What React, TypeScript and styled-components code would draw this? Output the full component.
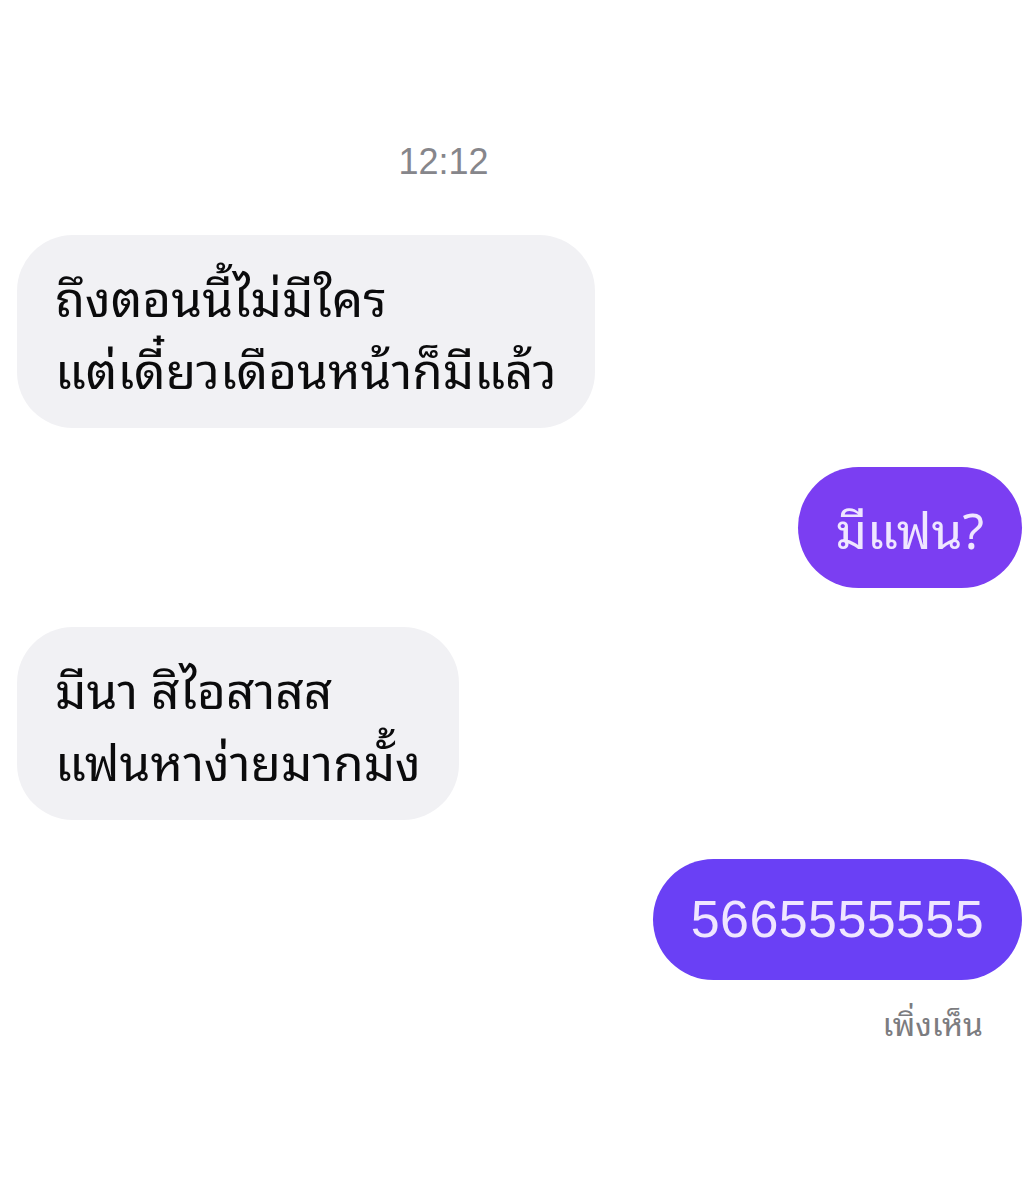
import React from "react";
import styled, { createGlobalStyle } from "styled-components";

const THAI = `"Noto Sans Thai Looped", "Noto Sans Thai", "Noto Sans", "DejaVu Sans", sans-serif`;

const GlobalStyle = createGlobalStyle`
  html, body {
    margin: 0;
    padding: 0;
    background: #ffffff;
  }
  body {
    font-family: ${THAI};
  }
`;

const Thread = styled.div`
  width: 1035px;
  min-height: 1192px;
  box-sizing: border-box;
  padding: 138px 13px 0 17px;
  display: flex;
  flex-direction: column;
  gap: 39px;
`;

const Stamp = styled.div`
  align-self: center;
  margin-right: 152px;
  margin-bottom: 10px;
  font-family: "Liberation Sans", Arial, sans-serif;
  font-size: 36px;
  line-height: 48px;
  color: #86868b;
`;

const Row = styled.div<{ $mine?: boolean }>`
  display: flex;
  flex-direction: column;
  align-items: ${(p) => (p.$mine ? "flex-end" : "flex-start")};
`;

const Bubble = styled.div<{ $mine?: boolean; $tone?: string }>`
  box-sizing: border-box;
  padding: 24px 38px 25px;
  border-radius: ${(p) => (p.$mine ? "61px" : "56px")};
  background: ${(p) => (p.$mine ? p.$tone : "#f1f1f4")};
  color: ${(p) => (p.$mine ? "#efe6ff" : "#0b0b0c")};
  font-size: 49.5px;
  line-height: 72px;
  white-space: pre-line;
`;

const Number = styled.span`
  display: block;
  font-family: "Liberation Sans", Arial, sans-serif;
  font-size: 52px;
  line-height: 72px;
  letter-spacing: 0.4px;
`;

const Seen = styled.div`
  margin-top: 20px;
  margin-right: 39px;
  font-size: 32px;
  line-height: 44px;
  color: #7c7c80;
`;

export default function App() {
  return (
    <>
      <GlobalStyle />
      <Thread>
        <Stamp>12:12</Stamp>
        <Row>
          <Bubble>{"ถึงตอนนี้ไม่มีใคร\nแต่เดี๋ยวเดือนหน้าก็มีแล้ว"}</Bubble>
        </Row>
        <Row $mine>
          <Bubble $mine $tone="#7b3ef2">มีแฟน?</Bubble>
        </Row>
        <Row>
          <Bubble>{"มีนา สิไอสาสส\nแฟนหาง่ายมากมั้ง"}</Bubble>
        </Row>
        <Row $mine>
          <Bubble $mine $tone="#6a40f5">
            <Number>5665555555</Number>
          </Bubble>
          <Seen>เพิ่งเห็น</Seen>
        </Row>
      </Thread>
    </>
  );
}
